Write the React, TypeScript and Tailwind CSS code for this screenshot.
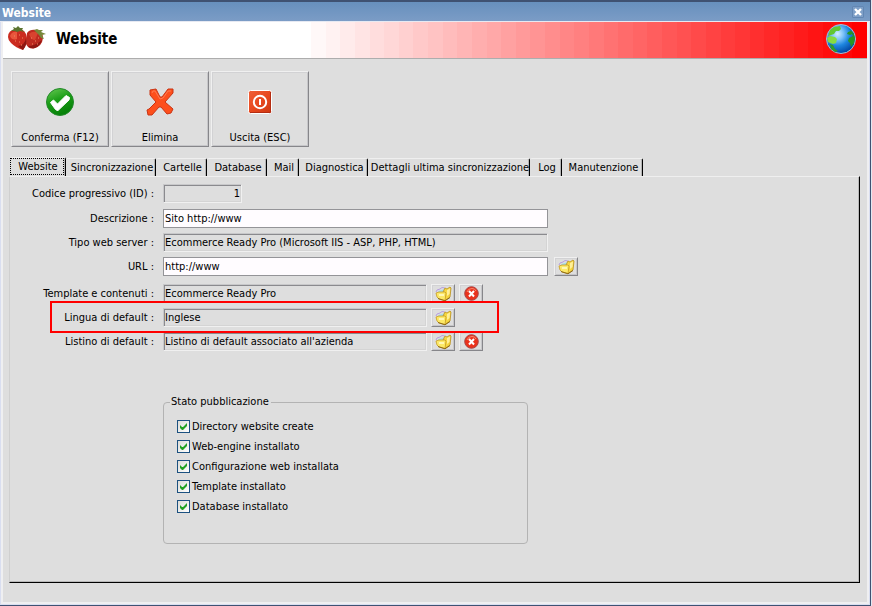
import type { ReactNode } from "react";

const bands = Array.from({ length: 38 }, (_, i) => Math.round(255 * (1 - (i + 1) / 38)));

const tabs = [
  { label: "Website", width: "w-[56px]" },
  { label: "Sincronizzazione", width: "w-[90px]" },
  { label: "Cartelle", width: "w-[51px]" },
  { label: "Database", width: "w-[60px]" },
  { label: "Mail", width: "w-[32px]" },
  { label: "Diagnostica", width: "w-[69px]" },
  { label: "Dettagli ultima sincronizzazione", width: "w-[162px]" },
  { label: "Log", width: "w-[32px]" },
  { label: "Manutenzione", width: "w-[81px]" },
];

const checks = [
  "Directory website create",
  "Web-engine installato",
  "Configurazione web installata",
  "Template installato",
  "Database installato",
];

const raised =
  "border border-t-[#f0f0f0] border-l-[#f0f0f0] border-r-[#86868a] border-b-[#86868a] shadow-[inset_1px_1px_0_#d2d2d4,inset_-1px_-1px_0_#c6c6c9]";
const sunken =
  "h-[19px] border border-t-[#c8c8ca] border-l-[#c8c8ca] border-r-[#f0f0f0] border-b-[#f0f0f0] bg-[#dedede] px-[1px] shadow-[inset_1px_1px_0_#8a8a8e,inset_-1px_-1px_0_#d4d4d4] outline-none";
const flat = "h-[19px] border border-[#949498] bg-[#fffcff] px-[1px] outline-none";

function Strawberries() {
  return (
    <svg width="38" height="26" viewBox="0 0 38 26" aria-hidden="true">
      <path d="M19 7 Q22 3 28 4 Q35 5 35 12 Q34 20 27 22 Q21 24 18 18Z" fill="#bd2a20" />
      <path d="M21 8 Q25 4 30 7 L27 14Q23 14 21 8Z" fill="#d8432f" />
      <path d="M0 11 Q0 4 8 3 Q15 2 18 8 Q21 15 15 24 Q8 22 3 17 Q0 14 0 11Z" fill="#cb2c20" />
      <path d="M2 10 Q4 5 9 6 L9 13Q4 15 2 10Z" fill="#e9553c" />
      <path d="M10 20 Q17 19 18 12 Q20 18 15 24Z" fill="#8e1712" />
      <path d="M20 20 Q27 20 34 14 Q32 20 27 22 Q22 23 20 20Z" fill="#8e1712" />
      <path d="M3 5 L6 3 L5 1 L8 2 L10 0 L12 2 L15 2 L14 4 L17 6 L12 5 L9 6 L7 5Z" fill="#5b7430" />
      <path d="M26 4 L29 3 L31 4 L35 4 L33 6 L38 8 L34 9 L36 13 L33 12 L31 9 L29 7Z" fill="#76883a" />
      <path d="M6 10h1M11 9h1M14 12h1M7 15h1M11 16h1M13 19h1M23 12h1M27 15h1M30 12h1M24 18h1M29 18h1" stroke="#f08a62" />
    </svg>
  );
}

function Globe() {
  return (
    <svg width="30" height="30" viewBox="0 0 30 30" aria-hidden="true">
      <defs>
        <radialGradient id="sea" cx="38%" cy="32%" r="68%">
          <stop offset="0" stopColor="#d4efff" />
          <stop offset="0.3" stopColor="#7cc2f8" />
          <stop offset="0.6" stopColor="#1e86e0" />
          <stop offset="1" stopColor="#0348a4" />
        </radialGradient>
      </defs>
      <circle cx="15" cy="15" r="14.5" fill="url(#sea)" stroke="#a9bdd2" />
      <path d="M4 6 L8 3 L14 2 L15 5 L13 7 L10 7 L8 10 L5 11 L2 12Z" fill="#62c832" />
      <path d="M1 14 L4 12 L9 13 L11 15 L10 19 L7 20 L4 19 L2 18Z" fill="#86dc40" />
      <path d="M4 20 L7 21 L9 25 L12 27 L9 28 L5 25Z" fill="#2f9a2c" />
      <path d="M22 4 L25 7 L22 8 L21 10 L24 11 L26 10 L27 12 L23 14 L22 17 L24 19 L25 23 L28 19 L29 14 Q28 8 22 4Z" fill="#279622" />
    </svg>
  );
}

function ConfirmIcon() {
  return (
    <svg width="28" height="28" viewBox="0 0 28 28" aria-hidden="true">
      <defs>
        <linearGradient id="ok" x1="0" y1="0" x2="0.4" y2="1">
          <stop offset="0" stopColor="#6acb56" />
          <stop offset="0.5" stopColor="#1c9e18" />
          <stop offset="1" stopColor="#078209" />
        </linearGradient>
      </defs>
      <circle cx="14" cy="14" r="13.5" fill="url(#ok)" stroke="#23892a" />
      <path d="M4.5 14.5 L7.5 12 L11.5 16 L20 7.5 L23.5 9.5 L23 12 L12 22.5 Q10.500 22.500 9.500 21.500Z" fill="#fff" stroke="#fff" strokeLinejoin="round" />
    </svg>
  );
}

function DeleteIcon() {
  return (
    <svg width="28" height="28" viewBox="0 0 28 28" aria-hidden="true">
      <path
        d="M4 2 L10 1 L14 9 L16 9 L22 1 L27 1 L27 5 L19 14 L27 21 L25 25 L21 26 L15 19 L13 19 L6 27 L2 27 L1 22 L3 21 L10 14 L4 7Z"
        fill="#fd4f1c"
        stroke="#c93414"
        strokeLinejoin="round"
      />
      <path d="M6 5 L7 3 L9 3 L14 11 L17 10 L22 3 L25 3" fill="none" stroke="#ff7a50" />
    </svg>
  );
}

function ExitIcon() {
  return (
    <svg width="24" height="24" viewBox="0 0 24 24" aria-hidden="true">
      <defs>
        <linearGradient id="exit" x1="0" y1="0" x2="1" y2="1">
          <stop offset="0" stopColor="#f0613a" />
          <stop offset="0.5" stopColor="#e8491f" />
          <stop offset="1" stopColor="#cc3712" />
        </linearGradient>
      </defs>
      <rect x="0.5" y="0.5" width="23" height="23" rx="2" fill="url(#exit)" stroke="#fff" />
      <path d="M22.5 2 V22.5 H2" fill="none" stroke="#b52d12" />
      <circle cx="12" cy="12" r="6.2" fill="none" stroke="#fff" strokeWidth="2" />
      <path d="M12 9 V15" stroke="#fff" strokeWidth="2" />
    </svg>
  );
}

function FolderIcon() {
  return (
    <svg width="17" height="16" viewBox="0 0 17 16" aria-hidden="true">
      <path d="M1 6 L2 4 L5 3 L7 1.500 L10 2" fill="none" stroke="#b79fe0" />
      <path d="M3 5 L10 3 L10 6 L4 7Z" fill="#a8dce8" />
      <path d="M8 6 L10 2 L12 3 L15 1 L16 2 L15 11 L10 14.500 L8 13Z" fill="#f6d740" stroke="#b98f1e" strokeWidth="0.800" />
      <path d="M12 4 L15 2.500 L14.500 8 L12 10Z" fill="#fff09a" />
      <path d="M1 7 L4 6 L10 6 L11 7 L10 14.500 L4 13 L2 11Z" fill="#fce968" stroke="#c59a22" strokeWidth="0.800" />
      <path d="M4 8 L9 8 L9 10 L4 10Z" fill="#fff7b4" />
      <path d="M3 12.500 L10 14.800 L15 11.500" fill="none" stroke="#8e6a14" />
    </svg>
  );
}

function RemoveIcon() {
  return (
    <svg width="15" height="15" viewBox="0 0 15 15" aria-hidden="true">
      <circle cx="7.5" cy="7.5" r="6.8" fill="#ea321c" stroke="#a84444" />
      <path d="M3 6 Q4 2.500 8 2.500 Q11 2.500 12 5" fill="none" stroke="#f88a72" />
      <path d="M5 5 L10 10.500 M10 5 L5 10.500" stroke="#fff" strokeWidth="2" />
    </svg>
  );
}

function ToolButton({ label, children }: { label: string; children: ReactNode }) {
  return (
    <button type="button" className={`flex h-[76px] w-[98px] flex-col items-center ${raised}`}>
      <span className="flex h-[59px] w-full items-center justify-center">{children}</span>
      <span className="leading-[14px]">{label}</span>
    </button>
  );
}

function SmallButton({ label, children }: { label: string; children: ReactNode }) {
  return (
    <button type="button" aria-label={label} className={`flex h-[19px] w-[24px] items-center justify-center ${raised}`}>
      {children}
    </button>
  );
}

function Row({ id, label, children }: { id: string; label: string; children: ReactNode }) {
  return (
    <div className="flex h-[19px] items-center">
      <label htmlFor={id} className="w-[144px] shrink-0 text-right">
        {label} :
      </label>
      <div className="ml-[9px] flex items-center gap-1">{children}</div>
    </div>
  );
}

export default function App() {
  return (
    <div className="flex min-h-screen bg-[#e3e8f0] pr-[1px] font-['DejaVu_Sans_Condensed','DejaVu_Sans',sans-serif] text-[11px] leading-[14px] text-black">
      <main className="flex flex-1 flex-col border-t-2 border-r border-b border-[#3f5272] bg-[#dedede]">
        <div className="flex h-[20px] items-center justify-between border-b border-[#e6e9f2] bg-linear-to-b from-[#6790bd] to-[#7b9cc6] pr-[6px] pl-[2px]">
          <h1 className="pt-[2px] text-[12px] leading-[16px] font-bold text-white">Website</h1>
          <button type="button" aria-label="Chiudi" className="flex size-[12px] items-center justify-center rounded-[1px] border border-[#6387b3] bg-[#7fa0c8]">
            <svg width="8" height="8" viewBox="0 0 8 8" aria-hidden="true">
              <path d="M1 1 L7 7 M7 1 L1 7" stroke="#fff" strokeWidth="2.4" />
            </svg>
          </button>
        </div>
        <div className="flex flex-1 flex-col border-l border-[#d9def0] border-r border-b">
          <div className="flex flex-1 flex-col border-x-2 border-b-2 border-[#efeff1]">
            <header className="flex h-[37px] border-b border-[#adadad] bg-white">
              <div className="flex w-[308px] shrink-0 items-center pb-[3px] pl-[5px]">
                <Strawberries />
                <h2 className="ml-[10px] text-[15px] leading-[18px] font-bold">Website</h2>
              </div>
              <div className="relative flex flex-1">
                {bands.map((v) => (
                  <span key={v} className="flex-1" style={{ backgroundColor: `rgb(255,${v},${v})` }} />
                ))}
                <span className="absolute top-[2px] right-[11px]">
                  <Globe />
                </span>
              </div>
            </header>

            <div className="flex gap-[2px] px-2 pt-3">
              <ToolButton label="Conferma (F12)"><ConfirmIcon /></ToolButton>
              <ToolButton label="Elimina"><DeleteIcon /></ToolButton>
              <ToolButton label="Uscita (ESC)"><ExitIcon /></ToolButton>
            </div>

            <div className="mr-[7px] mb-[19px] ml-[6px] mt-[10px] flex flex-1 flex-col">
              <div role="tablist" className="flex items-end pl-[1px]">
                {tabs.map((t, i) => (
                  <button
                    key={t.label}
                    type="button"
                    role="tab"
                    aria-selected={i === 0}
                    className={`flex items-center justify-center rounded-t-[2px] border-t border-r border-t-[#efefef] border-r-black whitespace-nowrap shadow-[inset_-1px_0_0_#b4b4b4] ${t.width} ${i === 0 ? "h-[19px] pr-[1px] pb-[1px]" : "h-[18px] pt-[1px] pl-[3px]"}`}
                  >
                    {i === 0 ? (
                      <span className="w-full border border-dotted border-black pl-[2px] leading-[15px]">{t.label}</span>
                    ) : (
                      t.label
                    )}
                  </button>
                ))}
              </div>

              <section className="flex-1 border-t border-r border-b border-l border-t-[#efefef] border-r-black border-b-black border-l-[#cfcfcf] pt-[7px] shadow-[inset_-1px_-1px_0_#b9b9b9]">
                <Row id="codice" label="Codice progressivo (ID)">
                  <input id="codice" readOnly defaultValue="1" className={`${sunken} w-[79px] text-right`} />
                </Row>
                <div className="mt-[6px] flex flex-col gap-[5px]">
                  <Row id="descrizione" label="Descrizione">
                    <input id="descrizione" defaultValue="Sito http://www" className={`${flat} w-[385px]`} />
                  </Row>
                  <Row id="tipo" label="Tipo web server">
                    <input id="tipo" readOnly defaultValue="Ecommerce Ready Pro (Microsoft IIS - ASP, PHP, HTML)" className={`${sunken} w-[385px]`} />
                  </Row>
                  <Row id="url" label="URL">
                    <input id="url" defaultValue="http://www" className={`${flat} mr-[2px] w-[385px]`} />
                    <SmallButton label="Apri URL"><FolderIcon /></SmallButton>
                  </Row>
                </div>
                <div className="mt-2 flex flex-col gap-[5px]">
                  <Row id="template" label="Template e contenuti">
                    <input id="template" readOnly defaultValue="Ecommerce Ready Pro" className={`${sunken} w-[264px]`} />
                    <SmallButton label="Scegli template"><FolderIcon /></SmallButton>
                    <SmallButton label="Rimuovi template"><RemoveIcon /></SmallButton>
                  </Row>
                  <div className="relative">
                    <Row id="lingua" label="Lingua di default">
                      <input id="lingua" readOnly defaultValue="Inglese" className={`${sunken} w-[264px]`} />
                      <SmallButton label="Scegli lingua"><FolderIcon /></SmallButton>
                    </Row>
                    <div className="pointer-events-none absolute -top-[7px] left-[40px] z-10 h-[32px] w-[449px] border-2 border-[#ff0000]" />
                  </div>
                  <Row id="listino" label="Listino di default">
                    <input id="listino" readOnly defaultValue="Listino di default associato all'azienda" className={`${sunken} w-[264px]`} />
                    <SmallButton label="Scegli listino"><FolderIcon /></SmallButton>
                    <SmallButton label="Rimuovi listino"><RemoveIcon /></SmallButton>
                  </Row>
                </div>

                <fieldset className="mt-11 ml-[153px] h-[149px] w-[365px] rounded-[4px] border border-[#b3b3b3] px-[6px]">
                  <legend className="pr-[2px] pl-[1px]">Stato pubblicazione</legend>
                  <div className="mt-[11px] flex flex-col gap-[7px] pl-[7px]">
                    {checks.map((c) => (
                      <label key={c} className="flex h-[13px] items-center gap-[2px]">
                        <span className="relative flex size-[13px]">
                          <input type="checkbox" defaultChecked className="peer size-[13px] appearance-none border border-[#1c5180] bg-linear-to-br from-[#dcdcd7] to-white" />
                          <svg className="pointer-events-none absolute top-[3px] left-[3px] hidden peer-checked:block" width="7" height="7" viewBox="0 0 7 7" aria-hidden="true">
                            <path d="M0 2 L2 4 L3 4 L6 1 L7 0 V3 L3 7 H2 L0 5Z" fill="#21a121" />
                          </svg>
                        </span>
                        {c}
                      </label>
                    ))}
                  </div>
                </fieldset>
              </section>
            </div>
          </div>
        </div>
      </main>
    </div>
  );
}
